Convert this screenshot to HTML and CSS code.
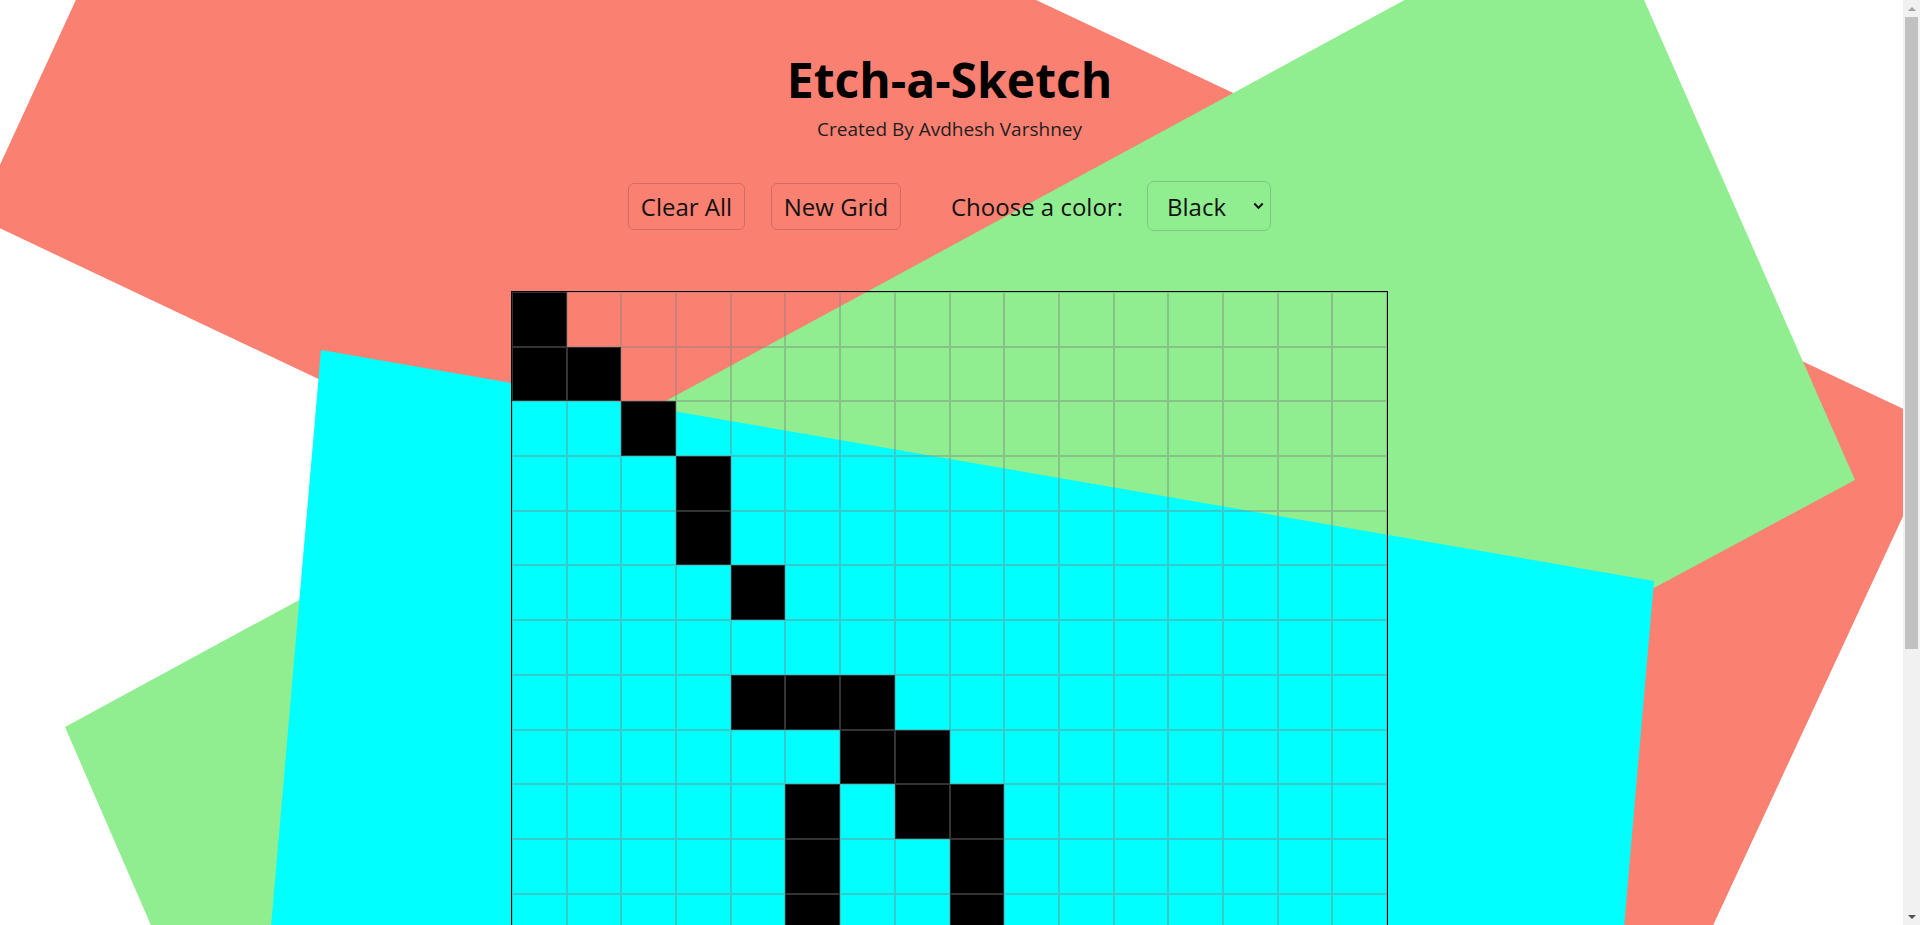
FILE: index.html
```html
<!DOCTYPE html>
<html lang="en">
<head>
<meta charset="utf-8">
<title>Etch-a-Sketch</title>
<link rel="stylesheet" href="styles.css">
</head>
<body>
<div class="page">
  <svg class="bg" xmlns="http://www.w3.org/2000/svg" aria-hidden="true">
    <polygon class="shape-salmon" points="247,-372 1944,428 1670,1018 -24,217"/>
    <polygon class="shape-green" points="1598,-105 1855,480 316,1306 65,727"/>
    <polygon class="shape-cyan" points="321,350 1654,581 1563,1631 230,1400"/>
  </svg>
  <main class="content">
    <header class="header">
      <h1 class="title">Etch-a-Sketch</h1>
      <p class="subtitle">Created By Avdhesh Varshney</p>
    </header>
    <div class="controls">
      <button class="btn btn-clear" type="button">Clear All</button>
      <button class="btn btn-new" type="button">New Grid</button>
      <label class="color-label" for="color">Choose a color:</label>
      <div class="select-wrap">
        <select id="color" class="color-select">
          <option>Black</option>
          <option>Rainbow</option>
          <option>Grayscale</option>
        </select>
        <svg class="chevron" viewBox="0 0 10 7" aria-hidden="true"><path d="M1.2 1.3 L5 5.2 L8.8 1.3"/></svg>
      </div>
    </div>
    <div class="grid">
      <div class="c on"></div><div class="c"></div><div class="c"></div><div class="c"></div><div class="c"></div><div class="c"></div><div class="c"></div><div class="c"></div><div class="c"></div><div class="c"></div><div class="c"></div><div class="c"></div><div class="c"></div><div class="c"></div><div class="c"></div><div class="c"></div>
      <div class="c on"></div><div class="c on"></div><div class="c"></div><div class="c"></div><div class="c"></div><div class="c"></div><div class="c"></div><div class="c"></div><div class="c"></div><div class="c"></div><div class="c"></div><div class="c"></div><div class="c"></div><div class="c"></div><div class="c"></div><div class="c"></div>
      <div class="c"></div><div class="c"></div><div class="c on"></div><div class="c"></div><div class="c"></div><div class="c"></div><div class="c"></div><div class="c"></div><div class="c"></div><div class="c"></div><div class="c"></div><div class="c"></div><div class="c"></div><div class="c"></div><div class="c"></div><div class="c"></div>
      <div class="c"></div><div class="c"></div><div class="c"></div><div class="c on"></div><div class="c"></div><div class="c"></div><div class="c"></div><div class="c"></div><div class="c"></div><div class="c"></div><div class="c"></div><div class="c"></div><div class="c"></div><div class="c"></div><div class="c"></div><div class="c"></div>
      <div class="c"></div><div class="c"></div><div class="c"></div><div class="c on"></div><div class="c"></div><div class="c"></div><div class="c"></div><div class="c"></div><div class="c"></div><div class="c"></div><div class="c"></div><div class="c"></div><div class="c"></div><div class="c"></div><div class="c"></div><div class="c"></div>
      <div class="c"></div><div class="c"></div><div class="c"></div><div class="c"></div><div class="c on"></div><div class="c"></div><div class="c"></div><div class="c"></div><div class="c"></div><div class="c"></div><div class="c"></div><div class="c"></div><div class="c"></div><div class="c"></div><div class="c"></div><div class="c"></div>
      <div class="c"></div><div class="c"></div><div class="c"></div><div class="c"></div><div class="c"></div><div class="c"></div><div class="c"></div><div class="c"></div><div class="c"></div><div class="c"></div><div class="c"></div><div class="c"></div><div class="c"></div><div class="c"></div><div class="c"></div><div class="c"></div>
      <div class="c"></div><div class="c"></div><div class="c"></div><div class="c"></div><div class="c on"></div><div class="c on"></div><div class="c on"></div><div class="c"></div><div class="c"></div><div class="c"></div><div class="c"></div><div class="c"></div><div class="c"></div><div class="c"></div><div class="c"></div><div class="c"></div>
      <div class="c"></div><div class="c"></div><div class="c"></div><div class="c"></div><div class="c"></div><div class="c"></div><div class="c on"></div><div class="c on"></div><div class="c"></div><div class="c"></div><div class="c"></div><div class="c"></div><div class="c"></div><div class="c"></div><div class="c"></div><div class="c"></div>
      <div class="c"></div><div class="c"></div><div class="c"></div><div class="c"></div><div class="c"></div><div class="c on"></div><div class="c"></div><div class="c on"></div><div class="c on"></div><div class="c"></div><div class="c"></div><div class="c"></div><div class="c"></div><div class="c"></div><div class="c"></div><div class="c"></div>
      <div class="c"></div><div class="c"></div><div class="c"></div><div class="c"></div><div class="c"></div><div class="c on"></div><div class="c"></div><div class="c"></div><div class="c on"></div><div class="c"></div><div class="c"></div><div class="c"></div><div class="c"></div><div class="c"></div><div class="c"></div><div class="c"></div>
      <div class="c"></div><div class="c"></div><div class="c"></div><div class="c"></div><div class="c"></div><div class="c on"></div><div class="c"></div><div class="c"></div><div class="c on"></div><div class="c"></div><div class="c"></div><div class="c"></div><div class="c"></div><div class="c"></div><div class="c"></div><div class="c"></div>
      <div class="c"></div><div class="c"></div><div class="c"></div><div class="c"></div><div class="c"></div><div class="c on"></div><div class="c"></div><div class="c"></div><div class="c on"></div><div class="c"></div><div class="c"></div><div class="c"></div><div class="c"></div><div class="c"></div><div class="c"></div><div class="c"></div>
      <div class="c"></div><div class="c"></div><div class="c"></div><div class="c"></div><div class="c"></div><div class="c"></div><div class="c"></div><div class="c"></div><div class="c"></div><div class="c"></div><div class="c"></div><div class="c"></div><div class="c"></div><div class="c"></div><div class="c"></div><div class="c"></div>
      <div class="c"></div><div class="c"></div><div class="c"></div><div class="c"></div><div class="c"></div><div class="c"></div><div class="c"></div><div class="c"></div><div class="c"></div><div class="c"></div><div class="c"></div><div class="c"></div><div class="c"></div><div class="c"></div><div class="c"></div><div class="c"></div>
      <div class="c"></div><div class="c"></div><div class="c"></div><div class="c"></div><div class="c"></div><div class="c"></div><div class="c"></div><div class="c"></div><div class="c"></div><div class="c"></div><div class="c"></div><div class="c"></div><div class="c"></div><div class="c"></div><div class="c"></div><div class="c"></div>
    </div>
  </main>
</div>
<div class="scrollbar" aria-hidden="true">
  <div class="sb-btn"><span class="sb-arrow-up"></span></div>
  <div class="sb-thumb"></div>
  <div class="sb-rest"></div>
  <div class="sb-btn"><span class="sb-arrow-down"></span></div>
</div>
</body>
</html>
```

FILE: styles.css
```css
html, body {
  margin: 0;
  padding: 0;
}

body {
  font-family: "Open Sans", "Noto Sans", sans-serif;
  color: #111;
  background: #fff;
}

.page {
  position: relative;
  overflow: hidden;
  width: 1903px;
  min-height: 1300px;
}

.bg {
  position: absolute;
  top: 0;
  left: 0;
  width: 100%;
  height: 100%;
  z-index: 0;
}

.shape-salmon { fill: #fa8072; }
.shape-green { fill: #90ee90; }
.shape-cyan { fill: #00ffff; }

.content {
  position: relative;
  z-index: 1;
  display: flex;
  flex-direction: column;
  align-items: center;
  padding: 48px 4px 132px 0;
}

.header {
  display: flex;
  flex-direction: column;
  align-items: center;
}

.title {
  margin: 0;
  font-size: 48px;
  line-height: 64px;
  font-weight: 700;
  color: #000;
}

.subtitle {
  margin: 4px 0 0;
  font-size: 19px;
  line-height: 26px;
  color: #1e1e1e;
}

.controls {
  display: flex;
  align-items: center;
  height: 50px;
  margin-top: 39px;
}

.btn {
  height: 47px;
  padding: 0;
  border: 1px solid rgba(0, 0, 0, 0.15);
  border-radius: 6px;
  background: transparent;
  font-family: inherit;
  font-size: 24px;
  color: #111;
}

.btn-clear { width: 117px; }

.btn-new {
  width: 130px;
  margin-left: 26px;
}

.color-label {
  margin-left: 50px;
  font-size: 24px;
  color: #111;
}

.select-wrap {
  position: relative;
  margin-left: 24px;
  display: flex;
}

.color-select {
  -webkit-appearance: none;
  appearance: none;
  width: 124px;
  height: 50px;
  padding: 0 0 0 19px;
  border: 1px solid rgba(0, 0, 0, 0.15);
  border-radius: 7px;
  background: transparent;
  font-family: inherit;
  font-size: 24px;
  color: #111;
}

.chevron {
  position: absolute;
  right: 7px;
  top: 21px;
  width: 11px;
  height: 8px;
  pointer-events: none;
  fill: none;
  stroke: #111;
  stroke-width: 1.9;
}

.grid {
  display: grid;
  grid-template-columns: repeat(16, 1fr);
  grid-template-rows: repeat(16, 1fr);
  width: 875px;
  height: 875px;
  margin-top: 60px;
  border: 1px solid #000;
}

.c {
  border: 1px solid rgba(128, 128, 128, 0.4);
}

.c.on {
  background: #000;
}

/* imitation of the classic window scrollbar shown in the capture */
.scrollbar {
  position: fixed;
  top: 0;
  right: 0;
  z-index: 5;
  display: flex;
  flex-direction: column;
  width: 17px;
  height: 100vh;
  background: #f1f1f1;
}

.sb-btn {
  display: flex;
  align-items: center;
  justify-content: center;
  height: 17px;
  flex: none;
}

.sb-arrow-up {
  width: 0;
  height: 0;
  border-left: 4px solid transparent;
  border-right: 4px solid transparent;
  border-bottom: 4px solid #a3a3a3;
}

.sb-arrow-down {
  width: 0;
  height: 0;
  border-left: 4px solid transparent;
  border-right: 4px solid transparent;
  border-top: 4px solid #505050;
}

.sb-thumb {
  flex: none;
  height: 632px;
  margin: 0 2px;
  background: #c1c1c1;
}

.sb-rest {
  flex: 1;
}
```
